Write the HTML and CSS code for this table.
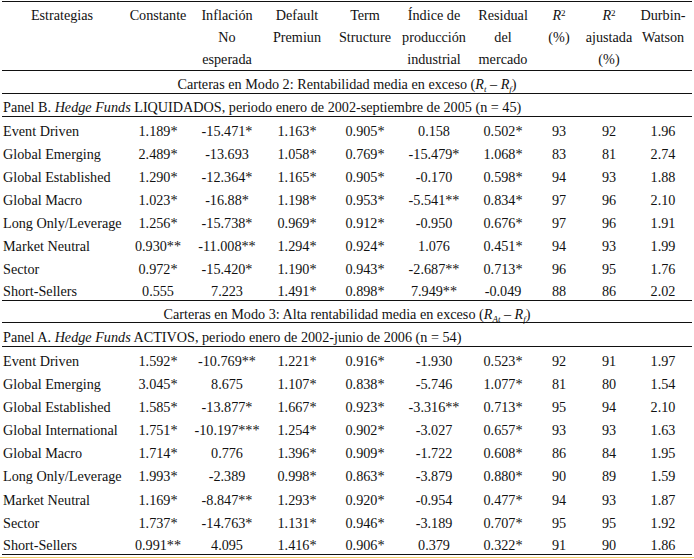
FILE: index.html
```html
<!DOCTYPE html>
<html lang="es">
<head>
<meta charset="utf-8">
<title>Estrategias</title>
<link rel="stylesheet" href="styles.css">
</head>
<body>
<table class="tbl">
  <colgroup>
    <col class="c1"><col class="c2"><col class="c3"><col class="c4"><col class="c5">
    <col class="c6"><col class="c7"><col class="c8"><col class="c9"><col class="c10">
  </colgroup>
  <thead>
    <tr class="head">
      <th>Estrategias</th>
      <th>Constante</th>
      <th>Inflación<br>No<br>esperada</th>
      <th>Default<br>Premiun</th>
      <th>Term<br>Structure</th>
      <th>Índice de<br>producción<br>industrial</th>
      <th>Residual<br>del<br>mercado</th>
      <th><i>R</i><sup>2</sup><br>(%)</th>
      <th><i>R</i><sup>2</sup><br>ajustada<br>(%)</th>
      <th>Durbin-<br>Watson</th>
    </tr>
  </thead>
  <tbody>
    <tr class="mode"><td colspan="10">Carteras en Modo 2: Rentabilidad media en exceso (<i>R<sub>t</sub></i> – <i>R<sub>f</sub></i>)</td></tr>
    <tr class="panel"><td colspan="10">Panel B. <i>Hedge Funds</i> LIQUIDADOS, periodo enero de 2002-septiembre de 2005 (n = 45)</td></tr>
    <tr><td>Event Driven</td><td>1.189*</td><td>-15.471*</td><td>1.163*</td><td>0.905*</td><td>0.158</td><td>0.502*</td><td>93</td><td>92</td><td>1.96</td></tr>
    <tr><td>Global Emerging</td><td>2.489*</td><td>-13.693</td><td>1.058*</td><td>0.769*</td><td>-15.479*</td><td>1.068*</td><td>83</td><td>81</td><td>2.74</td></tr>
    <tr><td>Global Established</td><td>1.290*</td><td>-12.364*</td><td>1.165*</td><td>0.905*</td><td>-0.170</td><td>0.598*</td><td>94</td><td>93</td><td>1.88</td></tr>
    <tr><td>Global Macro</td><td>1.023*</td><td>-16.88*</td><td>1.198*</td><td>0.953*</td><td>-5.541**</td><td>0.834*</td><td>97</td><td>96</td><td>2.10</td></tr>
    <tr><td>Long Only/Leverage</td><td>1.256*</td><td>-15.738*</td><td>0.969*</td><td>0.912*</td><td>-0.950</td><td>0.676*</td><td>97</td><td>96</td><td>1.91</td></tr>
    <tr><td>Market Neutral</td><td>0.930**</td><td>-11.008**</td><td>1.294*</td><td>0.924*</td><td>1.076</td><td>0.451*</td><td>94</td><td>93</td><td>1.99</td></tr>
    <tr><td>Sector</td><td>0.972*</td><td>-15.420*</td><td>1.190*</td><td>0.943*</td><td>-2.687**</td><td>0.713*</td><td>96</td><td>95</td><td>1.76</td></tr>
    <tr class="last"><td>Short-Sellers</td><td>0.555</td><td>7.223</td><td>1.491*</td><td>0.898*</td><td>7.949**</td><td>-0.049</td><td>88</td><td>86</td><td>2.02</td></tr>
    <tr class="mode mode3"><td colspan="10">Carteras en Modo 3: Alta rentabilidad media en exceso (<i>R<sub>At</sub></i> – <i>R<sub>f</sub></i>)</td></tr>
    <tr class="panel panela"><td colspan="10">Panel A. <i>Hedge Funds</i> ACTIVOS, periodo enero de 2002-junio de 2006 (n = 54)</td></tr>
    <tr><td>Event Driven</td><td>1.592*</td><td>-10.769**</td><td>1.221*</td><td>0.916*</td><td>-1.930</td><td>0.523*</td><td>92</td><td>91</td><td>1.97</td></tr>
    <tr><td>Global Emerging</td><td>3.045*</td><td>8.675</td><td>1.107*</td><td>0.838*</td><td>-5.746</td><td>1.077*</td><td>81</td><td>80</td><td>1.54</td></tr>
    <tr><td>Global Established</td><td>1.585*</td><td>-13.877*</td><td>1.667*</td><td>0.923*</td><td>-3.316**</td><td>0.713*</td><td>95</td><td>94</td><td>2.10</td></tr>
    <tr><td>Global International</td><td>1.751*</td><td>-10.197***</td><td>1.254*</td><td>0.902*</td><td>-3.027</td><td>0.657*</td><td>93</td><td>93</td><td>1.63</td></tr>
    <tr><td>Global Macro</td><td>1.714*</td><td>0.776</td><td>1.396*</td><td>0.909*</td><td>-1.722</td><td>0.608*</td><td>86</td><td>84</td><td>1.95</td></tr>
    <tr><td>Long Only/Leverage</td><td>1.993*</td><td>-2.389</td><td>0.998*</td><td>0.863*</td><td>-3.879</td><td>0.880*</td><td>90</td><td>89</td><td>1.59</td></tr>
    <tr class="tall"><td>Market Neutral</td><td>1.169*</td><td>-8.847**</td><td>1.293*</td><td>0.920*</td><td>-0.954</td><td>0.477*</td><td>94</td><td>93</td><td>1.87</td></tr>
    <tr><td>Sector</td><td>1.737*</td><td>-14.763*</td><td>1.131*</td><td>0.946*</td><td>-3.189</td><td>0.707*</td><td>95</td><td>95</td><td>1.92</td></tr>
    <tr class="last"><td>Short-Sellers</td><td>0.991**</td><td>4.095</td><td>1.416*</td><td>0.906*</td><td>0.379</td><td>0.322*</td><td>91</td><td>90</td><td>1.86</td></tr>
  </tbody>
</table>
<div class="rule"></div>
</body>
</html>
```

FILE: styles.css
```css
html, body {
  margin: 0;
  padding: 0;
  background: #fff;
}
body {
  font-family: "Liberation Serif", "DejaVu Serif", serif;
  font-size: 14.2px;
  color: #111;
  padding-top: 1px;
}
.tbl {
  margin-left: 2px;
  width: 690px;
  table-layout: fixed;
  border-collapse: collapse;
  border-top: 1px solid #111;
  border-bottom: 1px solid #111;
}
.c1 { width: 120px; }
.c2 { width: 72px; }
.c3 { width: 66px; }
.c4 { width: 74px; }
.c5 { width: 62px; }
.c6 { width: 76px; }
.c7 { width: 62px; }
.c8 { width: 50px; }
.c9 { width: 50px; }
.c10 { width: 58px; }

.tbl th {
  font-weight: normal;
  vertical-align: top;
  text-align: center;
  line-height: 22px;
  padding: 2px 0 0;
  white-space: nowrap;
}
.head {
  border-bottom: 1px solid #111;
}
.tbl td {
  padding: 5px 0 0;
  line-height: 18px;
  vertical-align: top;
  text-align: center;
  white-space: nowrap;
}
.tbl td:first-child {
  text-align: left;
  padding-left: 1px;
}
.tbl .mode td {
  text-align: center;
  padding-left: 0;
}
.mode, .panel, .last {
  border-bottom: 1px solid #111;
}
.tbl .mode td,
.tbl .panel td,
.tbl .last td {
  line-height: 17px;
}
.tbl .mode3 td {
  line-height: 16px;
}
.tbl .panela td {
  line-height: 18px;
}
.tbl .tall td {
  padding-top: 6px;
}
sup {
  font-size: 9px;
  vertical-align: 4px;
  line-height: 0;
}
sub {
  font-size: 9px;
  vertical-align: -3px;
  line-height: 0;
}
.rule {
  height: 1px;
  margin-top: 2px;
  background: #f3cd6b;
}
```
